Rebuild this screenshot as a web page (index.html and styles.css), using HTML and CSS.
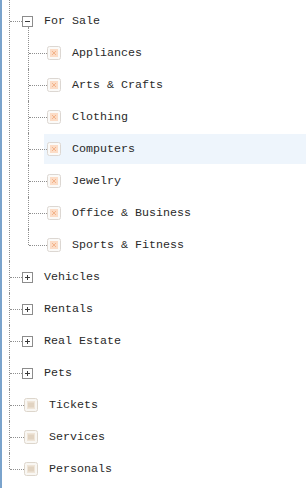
FILE: index.html
```html
<!DOCTYPE html>
<html>
<head>
<meta charset="utf-8">
<link rel="stylesheet" href="styles.css">
</head>
<body>
<div class="panel">
  <ul class="tree">
    <li class="node first">
      <div class="row"><span class="toggle minus"></span><span class="label">For Sale</span></div>
      <ul class="children">
        <li class="child first"><div class="crow"><svg class="icon" width="14" height="14" viewBox="0 0 14 14"><rect x="0.5" y="0.5" width="13" height="13" rx="2" fill="#fbfaf8" stroke="#dcd7d2"/><rect x="3" y="3" width="8" height="8" fill="#fcdcc6"/><path d="M5 5l4 4M9 5l-4 4" stroke="#f2b48c"/></svg><span class="label">Appliances</span></div></li>
        <li class="child"><div class="crow"><svg class="icon" width="14" height="14" viewBox="0 0 14 14"><rect x="0.5" y="0.5" width="13" height="13" rx="2" fill="#fbfaf8" stroke="#dcd7d2"/><rect x="3" y="3" width="8" height="8" fill="#fcdcc6"/><path d="M5 5l4 4M9 5l-4 4" stroke="#f2b48c"/></svg><span class="label">Arts &amp; Crafts</span></div></li>
        <li class="child"><div class="crow"><svg class="icon" width="14" height="14" viewBox="0 0 14 14"><rect x="0.5" y="0.5" width="13" height="13" rx="2" fill="#fbfaf8" stroke="#dcd7d2"/><rect x="3" y="3" width="8" height="8" fill="#fcdcc6"/><path d="M5 5l4 4M9 5l-4 4" stroke="#f2b48c"/></svg><span class="label">Clothing</span></div></li>
        <li class="child"><div class="crow selected"><svg class="icon" width="14" height="14" viewBox="0 0 14 14"><rect x="0.5" y="0.5" width="13" height="13" rx="2" fill="#fbfaf8" stroke="#dcd7d2"/><rect x="3" y="3" width="8" height="8" fill="#fcdcc6"/><path d="M5 5l4 4M9 5l-4 4" stroke="#f2b48c"/></svg><span class="label">Computers</span></div></li>
        <li class="child"><div class="crow"><svg class="icon" width="14" height="14" viewBox="0 0 14 14"><rect x="0.5" y="0.5" width="13" height="13" rx="2" fill="#fbfaf8" stroke="#dcd7d2"/><rect x="3" y="3" width="8" height="8" fill="#fcdcc6"/><path d="M5 5l4 4M9 5l-4 4" stroke="#f2b48c"/></svg><span class="label">Jewelry</span></div></li>
        <li class="child"><div class="crow"><svg class="icon" width="14" height="14" viewBox="0 0 14 14"><rect x="0.5" y="0.5" width="13" height="13" rx="2" fill="#fbfaf8" stroke="#dcd7d2"/><rect x="3" y="3" width="8" height="8" fill="#fcdcc6"/><path d="M5 5l4 4M9 5l-4 4" stroke="#f2b48c"/></svg><span class="label">Office &amp; Business</span></div></li>
        <li class="child last"><div class="crow"><svg class="icon" width="14" height="14" viewBox="0 0 14 14"><rect x="0.5" y="0.5" width="13" height="13" rx="2" fill="#fbfaf8" stroke="#dcd7d2"/><rect x="3" y="3" width="8" height="8" fill="#fcdcc6"/><path d="M5 5l4 4M9 5l-4 4" stroke="#f2b48c"/></svg><span class="label">Sports &amp; Fitness</span></div></li>
      </ul>
    </li>
    <li class="node"><div class="row"><span class="toggle plus"></span><span class="label">Vehicles</span></div></li>
    <li class="node"><div class="row"><span class="toggle plus"></span><span class="label">Rentals</span></div></li>
    <li class="node"><div class="row"><span class="toggle plus"></span><span class="label">Real Estate</span></div></li>
    <li class="node"><div class="row"><span class="toggle plus"></span><span class="label">Pets</span></div></li>
    <li class="node leaf"><div class="row"><svg class="icon" width="14" height="14" viewBox="0 0 14 14"><rect x="0.5" y="0.5" width="13" height="13" rx="2" fill="#f9f7f3" stroke="#ddd6cc"/><rect x="3" y="3" width="8" height="8" fill="#efe5d8"/><path d="M5 4.5v5M7 4.5v5M9 4.5v5" stroke="#d3c1aa"/></svg><span class="label">Tickets</span></div></li>
    <li class="node leaf"><div class="row"><svg class="icon" width="14" height="14" viewBox="0 0 14 14"><rect x="0.5" y="0.5" width="13" height="13" rx="2" fill="#f9f7f3" stroke="#ddd6cc"/><rect x="3" y="3" width="8" height="8" fill="#efe5d8"/><path d="M5 4.5v5M7 4.5v5M9 4.5v5" stroke="#d3c1aa"/></svg><span class="label">Services</span></div></li>
    <li class="node leaf last"><div class="row"><svg class="icon" width="14" height="14" viewBox="0 0 14 14"><rect x="0.5" y="0.5" width="13" height="13" rx="2" fill="#f9f7f3" stroke="#ddd6cc"/><rect x="3" y="3" width="8" height="8" fill="#efe5d8"/><path d="M5 4.5v5M7 4.5v5M9 4.5v5" stroke="#d3c1aa"/></svg><span class="label">Personals</span></div></li>
  </ul>
</div>
</body>
</html>
```
FILE: styles.css
```css
html, body {
  margin: 0;
  padding: 0;
  background: #ffffff;
}
body {
  font-family: "Liberation Mono", "DejaVu Sans Mono", monospace;
  font-size: 11.67px;
  color: #2a2a2a;
}
.panel {
  border-left: 2px solid #7aa3cc;
  min-height: 488px;
  box-sizing: border-box;
  padding-top: 5px;
}
.tree, .children {
  list-style: none;
  margin: 0;
  padding: 0;
}
.node {
  position: relative;
}
.node::before {
  content: "";
  position: absolute;
  left: 7px;
  top: 0;
  bottom: 0;
  border-left: 1px dotted #8f8f8f;
}
.node.first::before {
  top: -5px;
}
.node.last::before {
  bottom: auto;
  height: 16px;
}
.node::after {
  content: "";
  position: absolute;
  left: 8px;
  top: 16px;
  width: 12px;
  border-top: 1px dotted #8f8f8f;
}
.node.leaf::after {
  width: 14px;
}
.row {
  height: 32px;
  display: flex;
  align-items: center;
  padding-left: 20px;
}
.node.leaf .row {
  padding-left: 22px;
}
.toggle {
  position: relative;
  width: 11px;
  height: 11px;
  box-sizing: border-box;
  border: 1px solid #8c8c8c;
  background: #fff;
  margin-right: 11px;
  flex: none;
}
.toggle::before {
  content: "";
  position: absolute;
  left: 2px;
  top: 4px;
  width: 5px;
  height: 1px;
  background: #3a3a3a;
}
.toggle.plus::after {
  content: "";
  position: absolute;
  left: 4px;
  top: 2px;
  width: 1px;
  height: 5px;
  background: #3a3a3a;
}
.icon {
  display: block;
  flex: none;
  margin-right: 11px;
}
.label {
  white-space: nowrap;
}
.child {
  position: relative;
  padding: 1px 0;
}
.child::before {
  content: "";
  position: absolute;
  left: 26px;
  top: 0;
  bottom: 0;
  border-left: 1px dotted #8f8f8f;
}
.child.first::before {
  top: -10px;
}
.child.last::before {
  bottom: auto;
  height: 16px;
}
.child::after {
  content: "";
  position: absolute;
  left: 27px;
  top: 16px;
  width: 18px;
  border-top: 1px dotted #8f8f8f;
}
.crow {
  height: 30px;
  margin-left: 42px;
  padding-left: 3px;
  display: flex;
  align-items: center;
}
.crow.selected {
  background: #eef5fc;
}
```
